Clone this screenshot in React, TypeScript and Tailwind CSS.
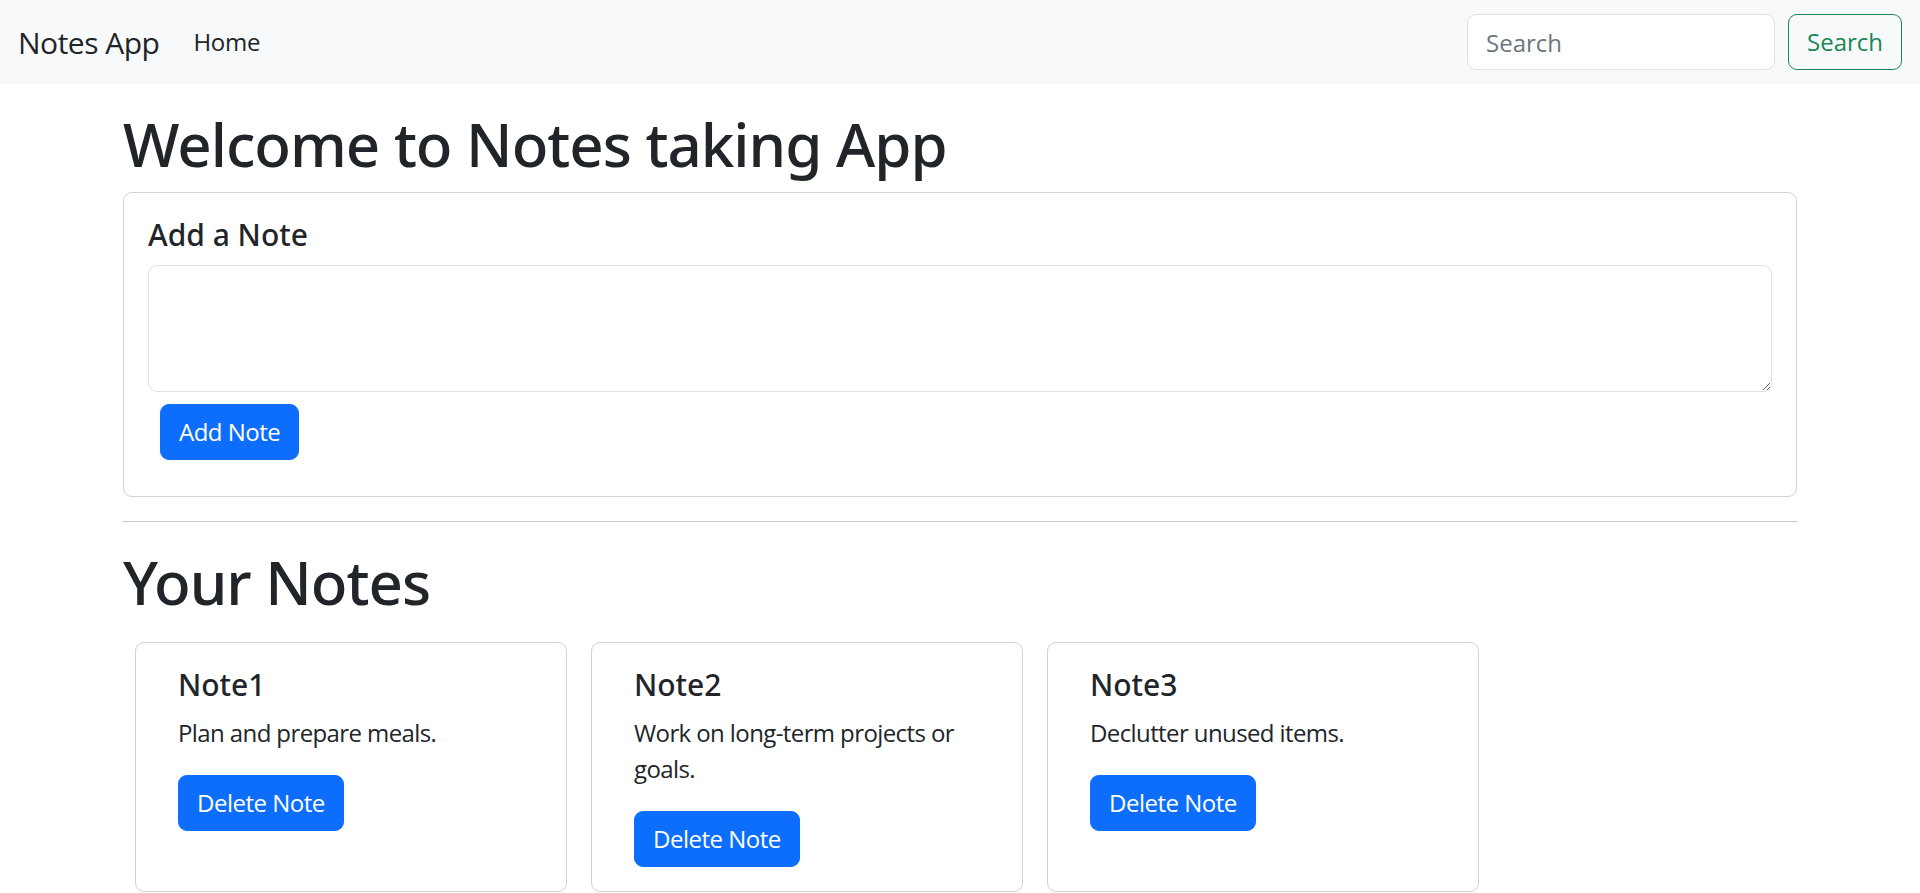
import { useState } from "react";

type Note = { title: string; body: string };

const initialNotes: Note[] = [
  { title: "Note1", body: "Plan and prepare meals." },
  { title: "Note2", body: "Work on long-term projects or goals." },
  { title: "Note3", body: "Declutter unused items." },
];

const App = () => {
  const [notes, setNotes] = useState<Note[]>(initialNotes);
  const [text, setText] = useState("");

  const addNote = () => {
    if (!text.trim()) return;
    setNotes([...notes, { title: `Note${notes.length + 1}`, body: text }]);
    setText("");
  };

  return (
    <div className="min-h-screen bg-white text-[#212529] font-['Open_Sans','Noto_Sans',sans-serif]">
      {/* navbar */}
      <nav className="flex items-center bg-[#f8f9fa] py-[12px] px-[18px]">
        <a href="#" className="text-[30px] leading-[45px] py-[7.5px] mr-[22px] tracking-[-0.5px]">
          Notes App
        </a>
        <a href="#" className="text-[24px] leading-[36px] py-[12px] px-[12px] tracking-[-0.3px]">
          Home
        </a>
        <form className="ml-auto flex items-center" onSubmit={(e) => e.preventDefault()}>
          <input
            type="search"
            placeholder="Search"
            className="w-[308px] h-[56px] mr-[13px] px-[18px] text-[24px] bg-white border border-[#dee2e6] rounded-[9px] outline-none placeholder:text-[#6c757d]"
          />
          <button className="h-[56px] px-[18px] text-[24px] text-[#198754] border border-[#198754] rounded-[9px]">
            Search
          </button>
        </form>
      </nav>

      <div className="w-[1674px] mx-auto mt-[24px]">
        <h1 className="text-[60px] leading-[72px] font-medium font-['Noto_Sans',sans-serif] tracking-[-1px] mb-[12px]">
          Welcome to Notes taking App
        </h1>

        <div className="border border-[#d2d2d2] rounded-[9px] p-[24px]">
          <h5 className="text-[30px] leading-[36px] font-medium font-['Noto_Sans',sans-serif] mb-[12px]">Add a Note</h5>
          <textarea
            value={text}
            onChange={(e) => setText(e.target.value)}
            className="block w-full h-[127px] px-[18px] py-[9px] text-[24px] border border-[#dee2e6] rounded-[9px] outline-none"
          />
          <button
            onClick={addNote}
            className="mt-[12px] mb-[12px] ml-[12px] h-[56px] px-[18px] text-[24px] tracking-[-0.5px] text-white bg-[#0d6efd] border border-[#0d6efd] rounded-[9px]"
          >
            Add Note
          </button>
        </div>

        <hr className="my-[24px] border-t border-[#c9cacb]" />

        <h1 className="text-[60px] leading-[72px] font-medium font-['Noto_Sans',sans-serif] tracking-[-1px] mb-[12px]">
          Your Notes
        </h1>

        <div className="flex flex-wrap items-stretch">
          {notes.map((note, i) => (
            <div key={i} className="w-[432px] m-[12px] border border-[#d2d2d2] rounded-[9px] pt-[24px] pb-[24px] px-[42px]">
              <h5 className="text-[30px] leading-[36px] font-medium font-['Noto_Sans',sans-serif] mb-[12px]">{note.title}</h5>
              <p className="text-[24px] leading-[36px] tracking-[-0.6px] mb-[24px]">{note.body}</p>
              <button
                onClick={() => setNotes(notes.filter((_, j) => j !== i))}
                className="h-[56px] px-[18px] text-[24px] tracking-[-0.5px] text-white bg-[#0d6efd] border border-[#0d6efd] rounded-[9px]"
              >
                Delete Note
              </button>
            </div>
          ))}
        </div>
      </div>
    </div>
  );
};

export default App;
